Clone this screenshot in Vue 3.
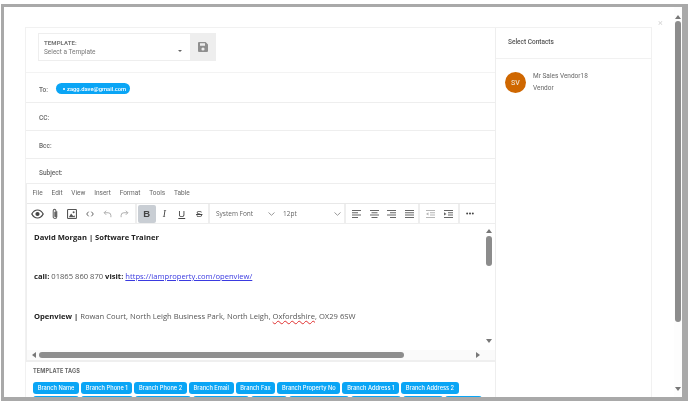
<script setup>
const rows = [
  { label: 'CC:', cls: 'cc' },
  { label: 'Bcc:', cls: 'bcc' },
  { label: 'Subject:', cls: 'subject' }
]
const menus = ['File', 'Edit', 'View', 'Insert', 'Format', 'Tools', 'Table']
const tags = ['Branch Name', 'Branch Phone 1', 'Branch Phone 2', 'Branch Email', 'Branch Fax', 'Branch Property No', 'Branch Address 1', 'Branch Address 2']
const peekWidths = [46, 52, 56, 56, 36, 60, 50, 40, 37]
</script>

<template>
  <div class="frame">
    <div class="page">
      <div class="gutter"></div>
      <div class="card">
        <div class="left">
          <div class="template-row">
            <div class="select">
              <div class="select-body">
                <div class="select-label">TEMPLATE:</div>
                <div class="select-value">Select a Template</div>
                <span class="caret"></span>
              </div>
              <div class="save">
                <svg width="10" height="10" viewBox="0 0 10 10"><path fill="#8f8f8f" d="M1 0h6.6L10 2.400V9a1 1 0 0 1-1 1H1a1 1 0 0 1-1-1V1a1 1 0 0 1 1-1zm1 1.200v2.600h5V1.200zM5 5.400a1.600 1.600 0 1 0 0 3.200 1.600 1.600 0 0 0 0-3.200z"/></svg>
              </div>
            </div>
          </div>
          <div class="row to">
            <span class="row-label">To:</span>
            <span class="chip"><i class="chip-x"></i>zagg.dave@gmail.com</span>
          </div>
          <div v-for="r in rows" :key="r.label" class="row" :class="r.cls">
            <span class="row-label">{{ r.label }}</span>
          </div>
          <div class="editor">
            <div class="menubar">
              <span v-for="m in menus" :key="m">{{ m }}</span>
            </div>
            <div class="toolbar">
              <div class="group g1">
                <button class="tb"><svg width="13" height="10" viewBox="0 0 13 10"><path fill="none" stroke="#444" stroke-width="1.200" d="M.8 5C2.200 2.400 4.200 1 6.500 1s4.300 1.400 5.700 4C10.800 7.600 8.800 9 6.500 9S2.200 7.600.8 5z"/><circle cx="6.500" cy="5" r="2.100" fill="#444"/></svg></button>
                <button class="tb"><svg width="8" height="12" viewBox="0 0 9 13"><path fill="none" stroke="#666" stroke-width="1.200" d="M6.500 3.500v6a2 2 0 0 1-4 0V2.800a1.500 1.500 0 0 1 3 0v6.200a.6.600 0 0 1-1.200 0V4"/></svg></button>
                <button class="tb"><svg width="10" height="10" viewBox="0 0 11 11"><rect x=".6" y=".6" width="9.800" height="9.800" rx=".8" fill="none" stroke="#555" stroke-width="1.200"/><circle cx="7.300" cy="3.500" r="1.100" fill="#555"/><path fill="#555" d="M2 9l2.500-4L7 8l1-1 1 2z"/></svg></button>
                <button class="tb"><svg width="8" height="6" viewBox="0 0 8 6"><path fill="none" stroke="#555" stroke-width=".9" d="M2.600.7L.7 3l1.900 2.300M5.400.7L7.300 3 5.400 5.300"/></svg></button>
                <button class="tb"><svg width="9" height="8" viewBox="0 0 10 9"><path fill="none" stroke="#a5a5a5" stroke-width="1" d="M3.500.8L1.200 3.100l2.300 2.300M1.400 3.100h4.400a3 3 0 0 1 3 3v2"/></svg></button>
                <button class="tb"><svg width="9" height="8" viewBox="0 0 10 9"><path fill="none" stroke="#a5a5a5" stroke-width="1" d="M6.500.8l2.300 2.300-2.300 2.300M8.600 3.100H4.200a3 3 0 0 0-3 3v2"/></svg></button>
              </div>
              <div class="group g2">
                <button class="tb active"><b class="fmt">B</b></button>
                <button class="tb"><i class="fmt it">I</i></button>
                <button class="tb"><u class="fmt">U</u></button>
                <button class="tb"><s class="fmt">S</s></button>
              </div>
              <div class="group g3">
                <span class="drop d1">System Font<svg width="7" height="4" viewBox="0 0 7 4"><path fill="none" stroke="#999" d="M.5.500l3 2.800 3-2.800"/></svg></span>
                <span class="drop d2">12pt<svg width="7" height="4" viewBox="0 0 7 4"><path fill="none" stroke="#999" d="M.5.500l3 2.800 3-2.800"/></svg></span>
              </div>
              <div class="group g4">
                <button class="tb al"><svg width="9" height="8" viewBox="0 0 9 8"><path fill="#666" d="M0 0h9v1H0zM0 2.300h6v1H0zM0 4.600h9v1H0zM0 7h6v1H0z"/></svg></button>
                <button class="tb al"><svg width="9" height="8" viewBox="0 0 9 8"><path fill="#666" d="M0 0h9v1H0zM1.500 2.300h6v1h-6zM0 4.600h9v1H0zM1.500 7h6v1h-6z"/></svg></button>
                <button class="tb al"><svg width="9" height="8" viewBox="0 0 9 8"><path fill="#666" d="M0 0h9v1H0zM3 2.300h6v1H3zM0 4.600h9v1H0zM3 7h6v1H3z"/></svg></button>
                <button class="tb al"><svg width="9" height="8" viewBox="0 0 9 8"><path fill="#666" d="M0 0h9v1H0zM0 2.300h9v1H0zM0 4.600h9v1H0zM0 7h9v1H0z"/></svg></button>
              </div>
              <div class="group g5">
                <button class="tb"><svg width="9" height="8" viewBox="0 0 9 8"><path fill="#b5b5b5" d="M0 0h9v1H0zM4 2.300h5v1H4zM4 4.600h5v1H4zM0 7h9v1H0zM2.500 2.300v3.200L0 3.900z"/></svg></button>
                <button class="tb"><svg width="9" height="8" viewBox="0 0 9 8"><path fill="#666" d="M0 0h9v1H0zM4 2.300h5v1H4zM4 4.600h5v1H4zM0 7h9v1H0zM0 2.300v3.200l2.500-1.600z"/></svg></button>
              </div>
              <div class="group g6">
                <button class="tb"><svg width="8" height="3" viewBox="0 0 9 3"><circle cx="1.300" cy="1.500" r="1.100" fill="#444"/><circle cx="4.500" cy="1.500" r="1.100" fill="#444"/><circle cx="7.700" cy="1.500" r="1.100" fill="#444"/></svg></button>
              </div>
            </div>
            <div class="body-wrap">
              <div class="content">
                <p class="l1"><b>David Morgan | Software Trainer</b></p>
                <p class="l2"><b>call:</b> 01865 860 870 <b>visit:</b> <a>https://iamproperty.com/openview/</a></p>
                <p class="l3"><b>Openview |</b> Rowan Court, North Leigh Business Park, North Leigh, <span class="squiggle">Oxfordshire</span>, OX29 6SW</p>
              </div>
              <div class="vscroll">
                <span class="arr up"></span>
                <span class="vthumb"></span>
                <span class="arr down"></span>
              </div>
            </div>
            <div class="hscroll">
              <span class="arr left-a"></span>
              <span class="hthumb"></span>
              <span class="arr right-a"></span>
            </div>
          </div>
          <div class="tags-block">
            <div class="tags-title">TEMPLATE TAGS</div>
            <div class="tags">
              <span v-for="t in tags" :key="t" class="tag">{{ t }}</span>
            </div>
            <div class="tags peek">
              <span v-for="(w, i) in peekWidths" :key="i" class="tag" :style="{ width: w + 'px' }"></span>
            </div>
          </div>
        </div>
        <div class="right">
          <div class="right-head">Select Contacts</div>
          <div class="contact">
            <div class="avatar">SV</div>
            <div class="contact-text">
              <div>Mr Sales Vendor18</div>
              <div>Vendor</div>
            </div>
          </div>
        </div>
      </div>
      <div class="close">×</div>
      <div class="pagebar">
        <span class="arr up"></span>
        <span class="pthumb"></span>
        <span class="arr down"></span>
      </div>
    </div>
  </div>
</template>

<style>
html, body { margin: 0; background: #fff; overflow: hidden; }
</style>

<style scoped>
* { box-sizing: border-box; }
.frame {
  width: 687px;
  height: 397px;
  margin: 4px 0 0 1px;
  border: solid #a9a9a9;
  border-width: 3px 6px 4px 3px;
  overflow: hidden;
  background: #fff;
  font-family: Roboto, "Liberation Sans", sans-serif;
  color: #555;
  filter: blur(0.35px);
}
.page { display: flex; height: 100%; align-items: flex-start; }
.gutter { width: 21px; flex: none; }
.card {
  width: 627px;
  height: 400px;
  margin-top: 20px;
  flex: none;
  display: flex;
  border: 1px solid #f1f1f1;
  border-bottom: 0;
}
.left { width: 470px; flex: none; border-right: 1px solid #eee; }
.template-row { height: 45px; padding: 5px 0 0 12px; border-bottom: 1px solid #f3f3f3; }
.select { width: 178px; height: 28px; display: flex; border: 1px solid #eee; }
.select-body { flex: 1; position: relative; padding: 5px 0 0 5px; }
.select-label { font-size: 6px; font-weight: 700; color: #777; line-height: 7px; letter-spacing: .1px; }
.select-value { font-size: 6.500px; color: #777; line-height: 10px; margin-top: 1px; }
.caret { position: absolute; right: 8px; top: 16px; border: 2px solid transparent; border-top: 2.500px solid #666; border-bottom: 0; }
.save { width: 26px; background: #eee; display: flex; align-items: center; justify-content: center; margin: -1px -1px -1px 0; }
.row { display: flex; align-items: center; padding: 3px 0 0 13px; border-bottom: 1px solid #eee; font-size: 6.500px; color: #666; }
.to { height: 30px; padding-top: 2px; }
.cc { height: 28px; }
.bcc { height: 28px; }
.subject { height: 24px; border-bottom: 0; }
.row-label { width: 17px; font-weight: 500; flex: none; }
.to .row-label { padding-top: 2px; }
.subject .row-label { width: auto; }
.chip { height: 11px; width: 74px; border-radius: 6px; background: #0aa5f5; color: #fff; font-size: 5.800px; font-weight: 500; display: flex; align-items: center; padding-left: 7px; white-space: nowrap; }
.chip-x { width: 2px; height: 2px; border-radius: 50%; background: #fff; margin-right: 2px; flex: none; }
.editor { border: 1px solid #eee; border-right: 0; height: 179px; display: flex; flex-direction: column; }
.menubar { height: 20px; display: flex; align-items: center; padding: 0 0 1px 5.500px; gap: 8.800px; font-size: 6.500px; color: #666; border-bottom: 1px solid #e8e8e8; flex: none; }
.toolbar { height: 20px; display: flex; border-bottom: 1px solid #eee; flex: none; }
.group { display: flex; align-items: center; border-right: 2px solid #eee; height: 100%; }
.tb { border: 0; background: none; padding: 0; width: 17.500px; height: 19px; display: flex; align-items: center; justify-content: center; font-family: "Liberation Sans", sans-serif; font-size: 9px; color: #444; flex: none; }
.g1 { width: 110px; padding-left: 1.500px; }
.g2 { width: 73px; padding-left: 1px; }
.g3 { width: 136px; }
.g4 { width: 74px; padding-left: 2px; }
.g5 { width: 40px; padding-left: 2px; }
.g6 { border-right: 0; padding-left: 1px; }
.active { background: #c9ced4; border-radius: 2px; height: 18px; }
.fmt { font-size: 9.500px; color: #444; }
.it { font-family: "Liberation Serif", serif; }
.drop { display: flex; align-items: center; justify-content: space-between; font-size: 6.500px; color: #666; font-family: "Open Sans", sans-serif; flex: none; }
.d1 { width: 66px; padding: 0 1px 0 6px; }
.d2 { width: 66px; padding: 0 1px 0 7px; }
.body-wrap { flex: none; height: 126px; display: flex; }
.content { flex: 1; padding-left: 7px; font-family: "Open Sans", sans-serif; font-size: 7.620px; color: #555; overflow: hidden; }
.content p { margin: 0; white-space: nowrap; }
.content b { color: #222; }
.l1 { padding-top: 8px; line-height: 10px; }
.l2 { padding-top: 29px; line-height: 10px; }
.l3 { padding-top: 30px; line-height: 10px; }
.content a { color: #3a3ae0; text-decoration: underline; }
.squiggle { text-decoration: underline wavy #e03030 .6px; }
.vscroll { width: 10px; flex: none; display: flex; flex-direction: column; align-items: center; padding: 5px 0 0; margin-right: 1px; }
.vthumb { width: 6px; height: 30px; margin-top: 3px; border-radius: 3px; background: #8c8c8c; flex: none; }
.vscroll .down { margin-top: 73px; }
.arr { width: 0; height: 0; border: 3px solid transparent; flex: none; }
.up { border-bottom: 4px solid #777; border-top: 0; }
.down { border-top: 4px solid #777; border-bottom: 0; }
.left-a { border-right: 4px solid #777; border-left: 0; }
.right-a { border-left: 4px solid #777; border-right: 0; }
.hscroll { height: 12px; background: #fafafa; border-bottom: 2px solid #efefef; display: flex; align-items: center; padding-left: 5px; flex: none; }
.hthumb { width: 365px; height: 6px; border-radius: 3px; background: #8c8c8c; margin-left: 3px; flex: none; }
.hscroll .right-a { margin-left: 72px; }
.tags-block { padding: 5px 0 0 7px; }
.tags-title { font-size: 5.500px; font-weight: 700; color: #666; line-height: 8px; font-family: Inter, sans-serif; letter-spacing: .12px; }
.tags { display: flex; gap: 2px; margin-top: 7px; }
.peek { margin-top: 1.500px; }
.tag { height: 12px; padding: 0 4.700px; border-radius: 3px; background: #0aa5f5; color: #fff; font-family: Inter, sans-serif; font-size: 5.700px; font-weight: 500; line-height: 12px; white-space: nowrap; flex: none; }
.right { flex: 1; }
.right-head { height: 31px; border-bottom: 1px solid #f1f1f1; padding-left: 12px; font-size: 6.500px; font-weight: 500; line-height: 29px; color: #555; }
.contact { display: flex; padding: 13px 0 0 9px; }
.avatar { width: 21px; height: 21px; border-radius: 50%; background: #cf6700; color: #eedcc6; font-size: 7px; font-weight: 500; display: flex; align-items: center; justify-content: center; flex: none; }
.contact-text { margin-left: 7px; font-size: 6.500px; line-height: 12px; color: #666; margin-top: -2px; }
.close { position: absolute; left: 654px; top: 12px; font-size: 9px; line-height: 9px; color: #d5d5d5; }
.pagebar { margin-left: auto; width: 8px; height: 100%; display: flex; flex-direction: column; align-items: center; padding-top: 8px; background: #fdfdfd; }
.pthumb { width: 6px; height: 301px; margin-top: 2px; border-radius: 3px; background: #8c8c8c; flex: none; }
.pagebar .down { margin-top: 65px; }
</style>
